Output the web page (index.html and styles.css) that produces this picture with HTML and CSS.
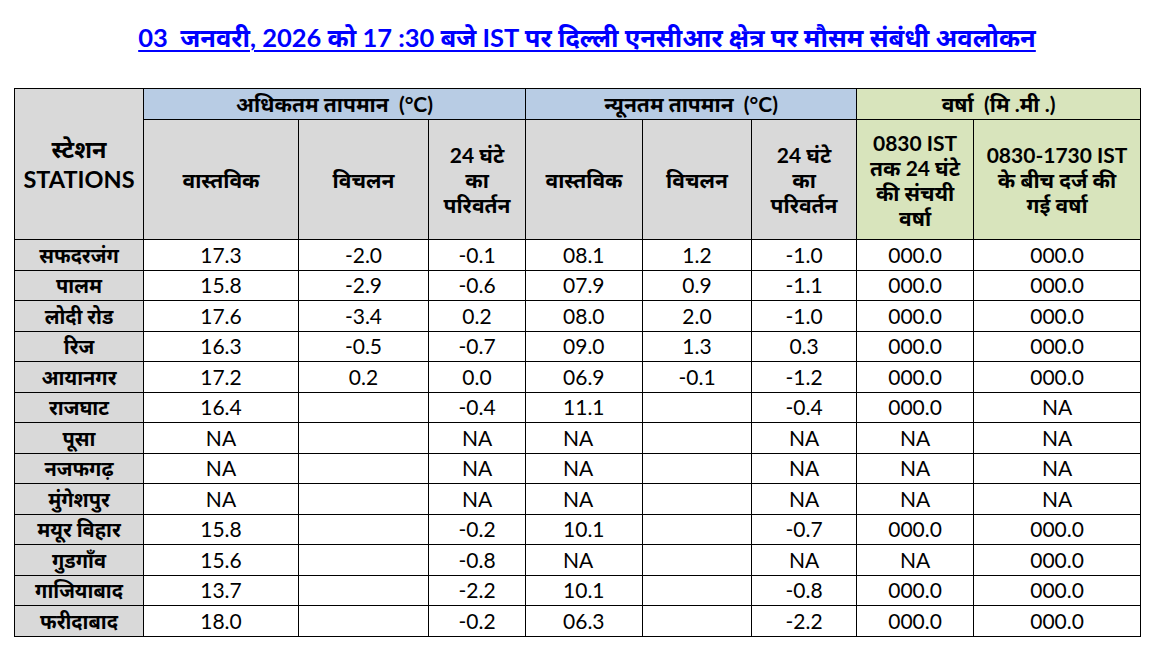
FILE: index.html
```html
<!DOCTYPE html>
<html lang="hi">
<head>
<meta charset="utf-8">
<title>मौसम संबंधी अवलोकन</title>
<link rel="stylesheet" href="styles.css">
</head>
<body>
<div class="page">
  <h1 class="title"><span class="title-link">03&nbsp; जनवरी, 2026 को 17 :30 बजे IST पर दिल्ली एनसीआर क्षेत्र पर मौसम संबंधी अवलोकन</span></h1>
  <table class="obs">
    <colgroup>
      <col class="c-st"><col class="c1"><col class="c2"><col class="c3"><col class="c4"><col class="c5"><col class="c6"><col class="c7"><col class="c8">
    </colgroup>
    <thead>
      <tr class="h1row">
        <th rowspan="2" class="st-head">स्टेशन<br>STATIONS</th>
        <th colspan="3" class="blue">अधिकतम तापमान&nbsp; (°C)</th>
        <th colspan="3" class="blue">न्यूनतम तापमान&nbsp; (°C)</th>
        <th colspan="2" class="green">वर्षा&nbsp; (मि .मी .)</th>
      </tr>
      <tr class="h2row">
        <th class="gray">वास्तविक</th>
        <th class="gray">विचलन</th>
        <th class="gray">24 घंटे<br>का<br>परिवर्तन</th>
        <th class="gray">वास्तविक</th>
        <th class="gray">विचलन</th>
        <th class="gray">24 घंटे<br>का<br>परिवर्तन</th>
        <th class="green">0830 IST<br>तक 24 घंटे<br>की संचयी<br>वर्षा</th>
        <th class="green">0830-1730 IST<br>के बीच दर्ज की<br>गई वर्षा</th>
      </tr>
    </thead>
    <tbody>
      <tr><th>सफदरजंग</th><td>17.3</td><td>-2.0</td><td>-0.1</td><td class="left">08.1</td><td>1.2</td><td>-1.0</td><td>000.0</td><td>000.0</td></tr>
      <tr><th>पालम</th><td>15.8</td><td>-2.9</td><td>-0.6</td><td class="left">07.9</td><td>0.9</td><td>-1.1</td><td>000.0</td><td>000.0</td></tr>
      <tr><th>लोदी रोड</th><td>17.6</td><td>-3.4</td><td>0.2</td><td class="left">08.0</td><td>2.0</td><td>-1.0</td><td>000.0</td><td>000.0</td></tr>
      <tr><th>रिज</th><td>16.3</td><td>-0.5</td><td>-0.7</td><td class="left">09.0</td><td>1.3</td><td>0.3</td><td>000.0</td><td>000.0</td></tr>
      <tr><th>आयानगर</th><td>17.2</td><td>0.2</td><td>0.0</td><td class="left">06.9</td><td>-0.1</td><td>-1.2</td><td>000.0</td><td>000.0</td></tr>
      <tr><th>राजघाट</th><td>16.4</td><td></td><td>-0.4</td><td class="left">11.1</td><td></td><td>-0.4</td><td>000.0</td><td>NA</td></tr>
      <tr><th>पूसा</th><td>NA</td><td></td><td>NA</td><td class="left">NA</td><td></td><td>NA</td><td>NA</td><td>NA</td></tr>
      <tr><th>नजफगढ़</th><td>NA</td><td></td><td>NA</td><td class="left">NA</td><td></td><td>NA</td><td>NA</td><td>NA</td></tr>
      <tr><th>मुंगेशपुर</th><td>NA</td><td></td><td>NA</td><td class="left">NA</td><td></td><td>NA</td><td>NA</td><td>NA</td></tr>
      <tr><th>मयूर विहार</th><td>15.8</td><td></td><td>-0.2</td><td class="left">10.1</td><td></td><td>-0.7</td><td>000.0</td><td>000.0</td></tr>
      <tr><th>गुडगाँव</th><td>15.6</td><td></td><td>-0.8</td><td class="left">NA</td><td></td><td>NA</td><td>NA</td><td>000.0</td></tr>
      <tr><th>गाजियाबाद</th><td>13.7</td><td></td><td>-2.2</td><td class="left">10.1</td><td></td><td>-0.8</td><td>000.0</td><td>000.0</td></tr>
      <tr><th>फरीदाबाद</th><td>18.0</td><td></td><td>-0.2</td><td class="left">06.3</td><td></td><td>-2.2</td><td>000.0</td><td>000.0</td></tr>
    </tbody>
  </table>
</div>
</body>
</html>
```
FILE: styles.css
```css
html, body {
  margin: 0;
  padding: 0;
  background: #ffffff;
}

body {
  font-family: Lato, "Noto Sans Devanagari", "Noto Sans", sans-serif;
  color: #000000;
}

.page {
  padding: 21px 0 0 14px;
  width: 1126px;
}

.title {
  margin: 0 0 35px 0;
  text-align: center;
  font-size: 25.5px;
  line-height: 32px;
  font-weight: 700;
  padding-left: 20px;
}

.title-link {
  color: #0000ff;
  text-decoration: underline;
  text-underline-offset: 3px;
  text-decoration-thickness: 2px;
}

.obs {
  border-collapse: collapse;
  table-layout: fixed;
  width: 1126px;
}

.c-st { width: 129px; }
.c1 { width: 155px; }
.c2 { width: 130px; }
.c3 { width: 97px; }
.c4 { width: 117px; }
.c5 { width: 109px; }
.c6 { width: 105px; }
.c7 { width: 117px; }
.c8 { width: 167px; }

.obs th,
.obs td {
  border: 1px solid #000000;
  padding: 0;
  text-align: center;
  vertical-align: middle;
}

.obs th {
  font-weight: 700;
}

.h1row { height: 31px; }
.h1row th {
  font-size: 21px;
  line-height: 26px;
}

.h2row { height: 120px; }
.h2row th {
  font-size: 21px;
  line-height: 25px;
}

.obs .h1row .st-head {
  background: #d9d9d9;
  font-size: 23.5px;
  line-height: 30px;
}

.blue { background: #b8cce4; }
.green { background: #d8e4bc; }
.gray { background: #d9d9d9; }

.obs tbody tr { height: 30.5px; }

.obs tbody th {
  background: #d9d9d9;
  font-size: 20px;
  line-height: 28px;
}

.obs tbody td {
  font-size: 21px;
  line-height: 28px;
}

.obs tbody td.left {
  text-align: left;
  padding-left: 37px;
}
```
